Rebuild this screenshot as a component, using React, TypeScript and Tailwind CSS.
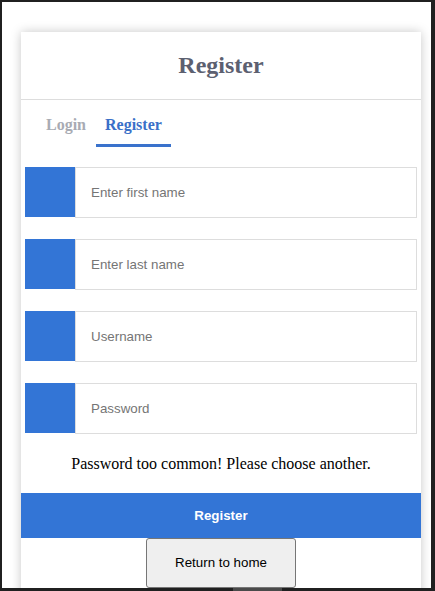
const FIELDS = ["Enter first name", "Enter last name", "Username", "Password"];

export default function App() {
  return (
    <div className="flex h-[591px] w-[435px] flex-col bg-[#202020] pl-[2px] pr-[4px] pt-[2px]">
      <div className="flex-1 overflow-hidden bg-white pl-[19px] pt-[30px]">
        <div className="w-[400px] bg-white pb-[40px] shadow-[0_0_10px_rgba(0,0,0,0.22)]">
          <h1 className="border-b border-[#dddddd] pb-[20px] pt-[19px] text-center font-['Liberation_Serif',serif] text-[24px] font-bold leading-[28px] text-[#5c6070]">
            Register
          </h1>

          <div className="ml-[15px] flex font-['Liberation_Serif',serif] text-[16px] font-bold leading-[20px]">
            <button className="border-b-[3px] border-transparent px-[10px] pb-[9px] pt-[15px] text-[#a8abb3]">Login</button>
            <button className="border-b-[3px] border-[#3a72cc] px-[9px] pb-[9px] pt-[15px] text-[#3a70c8]">Register</button>
          </div>

          <div className="mt-[20px] flex flex-col gap-[21px] px-[4px]">
            {FIELDS.map((f) => (
              <div key={f} className="flex items-start">
                <div className="h-[50px] w-[50px] shrink-0 bg-[#3375d6]" />
                <input
                  type={f === "Password" ? "password" : "text"}
                  placeholder={f}
                  className="h-[51px] flex-1 border border-[#dddddd] px-[15px] font-['Liberation_Sans',Arial,sans-serif] text-[13.33px] text-black outline-none placeholder:text-[#757575]"
                />
              </div>
            ))}
          </div>

          <p className="mt-[18px] text-center font-['Liberation_Serif',serif] text-[16px] leading-[24px] text-black">
            Password too common! Please choose another.
          </p>

          <button className="mt-[17px] h-[45px] w-full bg-[#3375d6] font-['Liberation_Sans',Arial,sans-serif] text-[13.33px] font-bold text-white">
            Register
          </button>

          <div className="flex justify-center">
            <button className="h-[50px] w-[150px] rounded-[3px] border border-[#767676] bg-[#efefef] font-['Liberation_Sans',Arial,sans-serif] text-[13.33px] text-black">
              Return to home
            </button>
          </div>
        </div>
      </div>
      <div className="flex h-[3px] shrink-0">
        <div className="ml-[231px] h-full w-[49px] bg-[#4a4a4a]" />
      </div>
    </div>
  );
}
